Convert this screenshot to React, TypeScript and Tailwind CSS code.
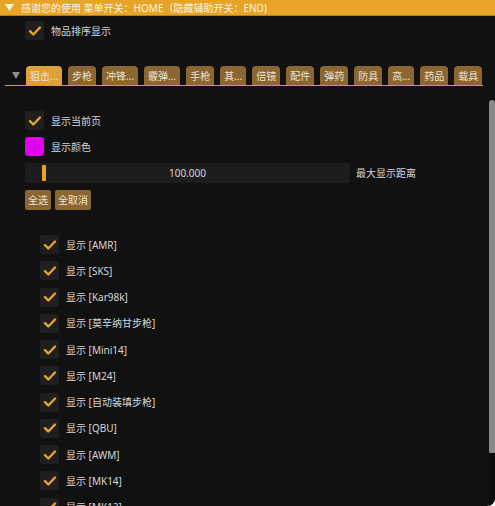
import React from "react";

const tabs = ["狙击...", "步枪", "冲锋...", "霰弹...", "手枪", "其...", "倍镜", "配件", "弹药", "防具", "高...", "药品", "载具"];
const items = ["AMR", "SKS", "Kar98k", "莫辛纳甘步枪", "Mini14", "M24", "自动装填步枪", "QBU", "AWM", "MK14", "MK12"];

const font = { fontFamily: '"Noto Sans", "Noto Sans CJK SC", sans-serif' };

// 勾选框
const CheckBox = () => (
  <div className="w-[19px] h-[19px] shrink-0 rounded-[2px] bg-[#1f1f1f] flex items-center justify-center">
    <svg width="14" height="12" viewBox="0 0 14 12">
      <path d="M2 6.2 L5.3 9.5 L12 2.5" fill="none" stroke="#e6a232" strokeWidth="2.4" strokeLinecap="round" strokeLinejoin="round" />
    </svg>
  </div>
);

const CheckRow = ({ label }: { label: string }) => (
  <div className="flex items-center h-[19px] gap-[7px]">
    <CheckBox />
    <span className="text-[10px] leading-none text-[#d6d6d6]">{label}</span>
  </div>
);

export default function App() {
  return (
    <div className="w-[495px] h-[506px] bg-[#111111] overflow-hidden rounded-br-[8px] flex flex-col" style={font}>
      {/* 标题栏 */}
      <div className="h-[16px] shrink-0 bg-[#e8a427] border-b border-[#b67c18] flex items-center pl-[5px] gap-[7px]">
        <svg width="9" height="7" viewBox="0 0 9 7">
          <path d="M0 0 H9 L4.5 7 Z" fill="#f4f0e6" />
        </svg>
        <span className="text-[10px] leading-none text-[#fbf3e2] whitespace-nowrap">感谢您的使用 菜单开关：HOME（隐藏辅助开关：END)</span>
      </div>

      <div className="pl-[25px] pt-[5px]">
        <CheckRow label="物品排序显示" />
      </div>

      {/* 标签页 */}
      <div className="mt-[26px] ml-[5px] w-[478px] flex items-end border-b border-[#d99b35]">
        <div className="w-[21px] h-[19px] flex items-center justify-center">
          <svg width="8" height="7" viewBox="0 0 8 7">
            <path d="M0 0 H8 L4 7 Z" fill="#8a8a8a" />
          </svg>
        </div>
        <div className="flex gap-[6px]">
          {tabs.map((t, i) => (
            <div
              key={t}
              className={
                "h-[19px] px-[4px] rounded-t-[4px] flex items-center text-[10px] leading-none text-[#ece3d2] whitespace-nowrap " +
                (i === 0 ? "bg-[#dfa03a]" : "bg-[#8b6631]")
              }
            >
              {t}
            </div>
          ))}
        </div>
      </div>

      {/* 子窗口 */}
      <div className="mt-[14px] flex-1 flex min-h-0">
        <div className="flex-1 pl-[25px] pt-[11px] flex flex-col overflow-hidden">
          <div className="flex flex-col gap-[7px]">
            <CheckRow label="显示当前页" />
            <div className="flex items-center h-[19px] gap-[7px]">
              <div className="w-[19px] h-[19px] rounded-[3px] bg-[#e200f2]" />
              <span className="text-[10px] leading-none text-[#d6d6d6]">显示颜色</span>
            </div>
            <div className="flex items-center gap-[6px]">
              <div className="w-[325px] h-[20px] rounded-[2px] bg-[#1d1d1d] flex items-center relative">
                <div className="ml-[17px] w-[4px] h-[16px] rounded-[1px] bg-[#e8a427]" />
                <span className="absolute inset-0 flex items-center justify-center text-[10px] leading-none text-[#d6d6d6]">100.000</span>
              </div>
              <span className="text-[10px] leading-none text-[#d6d6d6]">最大显示距离</span>
            </div>
            <div className="flex gap-[4px]">
              <div className="h-[20px] px-[3px] rounded-[2px] bg-[#8b6631] flex items-center text-[10px] leading-none text-[#ece3d2]">全选</div>
              <div className="h-[20px] px-[3px] rounded-[2px] bg-[#8b6631] flex items-center text-[10px] leading-none text-[#ece3d2]">全取消</div>
            </div>
          </div>

          <div className="mt-[25px] pl-[15px] flex flex-col gap-[7.25px]">
            {items.map((it) => (
              <CheckRow key={it} label={`显示 [${it}]`} />
            ))}
          </div>
        </div>

        {/* 滚动条 */}
        <div className="w-[6px] shrink-0 bg-[#0c0c0c] flex flex-col">
          <div className="h-[353px] bg-[#8a8a8a] rounded-t-[3px] rounded-b-[1px]" />
        </div>
      </div>
    </div>
  );
}
